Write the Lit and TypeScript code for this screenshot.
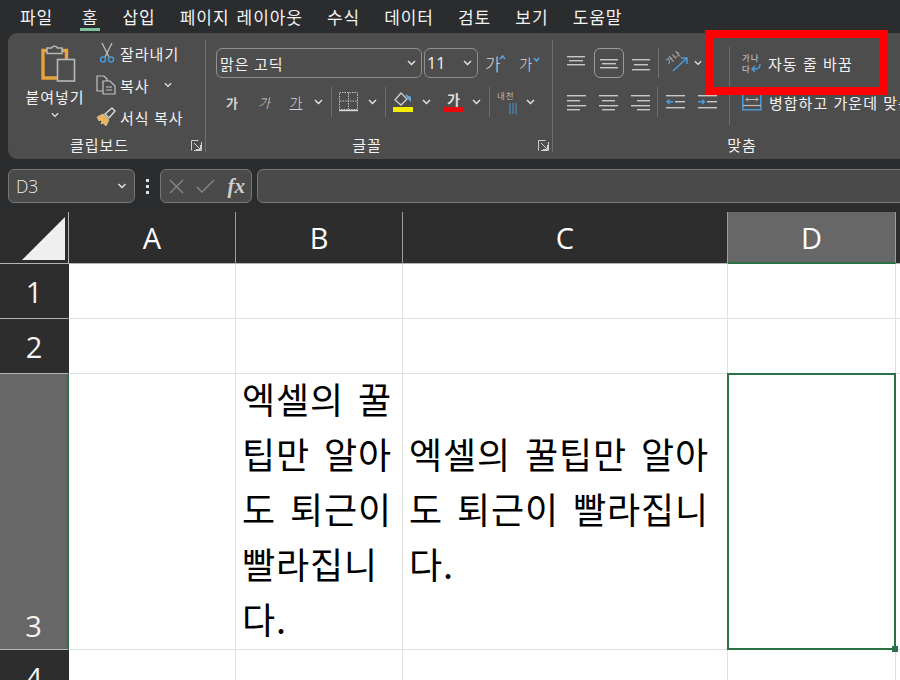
import { LitElement, html, css, svg } from "lit";
import { customElement } from "lit/decorators.js";

const chev = (w = 9, c = "#e6e6e6") => html`<svg class="chev" width="${w}" height="6" viewBox="0 0 9 6"><polyline points="1,1 4.5,4.5 8,1" fill="none" stroke="${c}" stroke-width="1.4"/></svg>`;
const lines = (rows: number[][], w = 20, h = 16) => html`<svg width="${w}" height="${h}" viewBox="0 0 ${w} ${h}">${rows.map(r => svg`<rect x="${r[0]}" y="${r[2]}" width="${r[1]}" height="1.4" fill="#c8c8c8"/>`)}</svg>`;
const launcher = html`<svg class="launcher" width="11" height="11" viewBox="0 0 11 11"><path d="M.5 10.5V.5h7M3 3l6 6M9.5 5v4.5H5M10.5 2v8.5H3" fill="none" stroke="#d0d0d0" stroke-width="1"/></svg>`;

const paste = html`<svg width="35" height="38" viewBox="0 0 35 38">
  <path d="M2 6.500h23.500v27.500H2z" fill="none" stroke="#e8a33d" stroke-width="3.400"/>
  <path d="M6 9.500V4h4.500a3.500 3.500 0 0 1 6 0h4.500v5.500z" fill="#4d4d4d" stroke="#b8b8b8" stroke-width="1.500"/>
  <rect x="16.500" y="15.500" width="17" height="21.500" fill="#4d4d4d" stroke="#b8b8b8" stroke-width="1.600"/>
</svg>`;
const scissors = html`<svg width="16" height="20" viewBox="0 0 16 20">
  <path d="M3 0l7 14M13 0L6 14" fill="none" stroke="#c4c4c4" stroke-width="1.200"/>
  <circle cx="4" cy="16.500" r="2.500" fill="none" stroke="#4a97d0" stroke-width="1.500"/>
  <circle cx="12" cy="16.500" r="2.500" fill="none" stroke="#4a97d0" stroke-width="1.500"/>
</svg>`;
const copy = html`<svg width="21" height="20" viewBox="0 0 21 20">
  <path d="M7 16H1V1h7l3 3v2" fill="none" stroke="#c4c4c4" stroke-width="1.200"/>
  <path d="M7 6h7l5 5v8H7z" fill="#4d4d4d" stroke="#c4c4c4" stroke-width="1.200"/>
  <path d="M10 12h6M10 15h6" stroke="#c4c4c4" stroke-width="1"/>
</svg>`;
const brush = html`<svg width="21" height="20" viewBox="0 0 21 20">
  <path d="M1 10l6-3 6 6-3 6-3-3-2 1 1-3-2-1-1 1z" fill="#e9b45a" stroke="#f0d9a8" stroke-width=".6"/>
  <path d="M9 7l7-6 3 3-6 7z" fill="none" stroke="#d6d6d6" stroke-width="1.500"/>
</svg>`;
const borders = html`<svg width="20" height="20" viewBox="0 0 20 20">
  <rect x=".5" y=".5" width="18" height="17" fill="none" stroke="#bdbdbd" stroke-dasharray="1.500 1"/>
  <path d="M9.500 1v16M1 9h18" stroke="#bdbdbd" stroke-dasharray="1.500 1"/>
  <path d="M0 18.500h19" stroke="#d8d8d8" stroke-width="1.400"/>
</svg>`;
const fill = html`<svg width="21" height="21" viewBox="0 0 21 21">
  <path d="M8 1l-6 7 6 5 6-6z" fill="none" stroke="#cfcfcf" stroke-width="1.300"/>
  <path d="M12 2l6 3v5l-3-3z" fill="#6fa8d8"/>
  <rect x="0" y="15" width="20" height="5" fill="#f5ee00"/>
</svg>`;
const fontColor = html`<svg width="20" height="21" viewBox="0 0 20 21">
  <text x="10" y="13" text-anchor="middle" font-size="14" font-weight="700" fill="#dcdcdc" font-family="'Noto Sans CJK KR',sans-serif">가</text>
  <rect x="0" y="15" width="20" height="5" fill="#e8090c"/>
</svg>`;
const vertical = html`<svg width="22" height="24" viewBox="0 0 22 24">
  <text x="1" y="9" font-size="8.500" fill="#b8b8b8" font-family="'Noto Sans CJK KR',sans-serif">내천</text>
  <path d="M14 13v11M17 13v11M20 13v11" stroke="#4a97d0" stroke-width="1"/>
</svg>`;
const orient = html`<svg width="23" height="26" viewBox="0 0 23 26">
  <text transform="translate(3 15) rotate(-40)" font-size="8" fill="#d0d0d0" font-family="'Noto Sans CJK KR',sans-serif">가나</text>
  <path d="M7 21L21 8M15 8h6v6" fill="none" stroke="#4d9bd8" stroke-width="1.500"/>
</svg>`;
const wrap = html`<svg width="19" height="20" viewBox="0 0 19 20">
  <text x="0" y="8" font-size="8.500" fill="#cfcfcf" font-family="'Noto Sans CJK KR',sans-serif">가나</text>
  <text x="0" y="19" font-size="8.500" fill="#cfcfcf" font-family="'Noto Sans CJK KR',sans-serif">다</text>
  <path d="M18 11c0 4-2 5-4 5H10M13 13l-3 3 3 3" fill="none" stroke="#4d9bd8" stroke-width="1.400"/>
</svg>`;
const merge = html`<svg width="20" height="18" viewBox="0 0 20 18">
  <rect x=".8" y=".8" width="18" height="16" fill="none" stroke="#4d9bd8" stroke-width="1.500"/>
  <path d="M1 12.500h18" stroke="#bdbdbd" stroke-width="1.200"/>
  <path d="M4 6.500h12M6 4.500l-2 2 2 2M14 4.500l2 2-2 2" fill="none" stroke="#bdbdbd" stroke-width="1"/>
</svg>`;
const indentL = html`<svg width="19" height="14" viewBox="0 0 19 14">
  <rect x="0" y="0" width="19" height="1.400" fill="#c8c8c8"/><rect x="9" y="6" width="10" height="1.400" fill="#c8c8c8"/><rect x="0" y="12" width="19" height="1.400" fill="#c8c8c8"/>
  <path d="M7 6.700H1M3.500 4.500L1 6.700l2.500 2.200" fill="none" stroke="#4d9bd8" stroke-width="1.400"/>
</svg>`;
const indentR = html`<svg width="19" height="14" viewBox="0 0 19 14">
  <rect x="0" y="0" width="19" height="1.400" fill="#c8c8c8"/><rect x="9" y="6" width="10" height="1.400" fill="#c8c8c8"/><rect x="0" y="12" width="19" height="1.400" fill="#c8c8c8"/>
  <path d="M0 6.700h6M4 4.500l2.500 2.200L4 8.900" fill="none" stroke="#4d9bd8" stroke-width="1.400"/>
</svg>`;

@customElement("app-root")
export class AppRoot extends LitElement {
  static styles = css`
    :host { display: block; width: 900px; height: 680px; overflow: hidden; background: #2b2c2e; font-family: "Noto Sans CJK KR", "Noto Sans", sans-serif; color: #f2f2f2; }
    svg { display: block; flex: none; overflow: visible; }
    .sp2 { width: 2px; flex: none; } .sp6 { width: 6px; flex: none; } .sp7 { width: 7px; flex: none; } .sp8 { width: 8px; flex: none; } .sp9 { width: 9px; flex: none; } .sp12 { width: 12px; flex: none; } .sp13 { width: 13px; flex: none; } .sp5 { width: 5px; flex: none; }
    .tabs { display: flex; height: 33px; padding-left: 20px; gap: 24.200px; font-size: 17px; letter-spacing: .9px; word-spacing: 2.500px; align-items: flex-start; }
    .tab { height: 31px; line-height: 33px; white-space: pre; }
    .tab.on { border-bottom: 3px solid #7cc29c; box-sizing: border-box; padding: 0 2px; margin: 0 -2px 0 2.500px; }
    .ribbon { position: relative; margin-left: 8px; width: 912px; height: 126px; background: #4d4d4d; border-radius: 9px 0 0 9px; display: flex; box-sizing: border-box; padding: 7px 0; font-size: 15px; letter-spacing: 1px; }
    .group { display: flex; flex-direction: column; height: 112px; box-sizing: border-box; border-right: 1px solid #6e6e6e; position: relative; flex: none; }
    .g1 { width: 198px; padding-left: 12px; }
    .g2 { width: 347px; padding-left: 10px; }
    .g3 { flex: 1; padding-left: 14px; border: 0; }
    .body { height: 93px; display: flex; }
    .label { box-sizing: border-box; height: 19px; padding-top: 4px; line-height: 15px; text-align: center; font-size: 15px; }
    .g1 .label { padding-right: 26px; }
    .g2 .label { padding-right: 34px; }
    .g3 .label { width: 350px; }
    .launcher { position: absolute; right: 3px; bottom: 1px; }
    .pastecol { width: 70px; display: flex; flex-direction: column; align-items: center; }
    .pastecol .ic { margin-top: 4px; height: 38px; margin-left: 6px; }
    .pastecol .t { margin-top: 5px; line-height: 20px; }
    .pastecol .chev { margin-top: 5px; }
    .smalls { display: flex; flex-direction: column; margin-left: 6px; padding-top: 3px; gap: 12px; }
    .sm { display: flex; align-items: center; height: 20px; gap: 3px; white-space: pre; }
    .sm .ic { width: 21px; display: flex; justify-content: center; }
    .sm .chev { margin-left: 11px; }
    .col { display: flex; flex-direction: column; }
    .row { display: flex; align-items: center; }
    .r1 { height: 30px; margin-top: 8px; }
    .r2 { height: 30px; margin-top: 9px; }
    .select { box-sizing: border-box; height: 30px; border: 1px solid #8f8f8f; border-radius: 6px; display: flex; align-items: center; justify-content: space-between; padding: 0 5px 0 3px; font-size: 15px; letter-spacing: 1px; background: #4d4d4d; }
    .s-font { width: 206px; margin-right: 2px; }
    .s-size { width: 54px; font-family: "Open Sans", sans-serif; font-size: 16px; padding-left: 2px; letter-spacing: 0; }
    .ga { position: relative; color: #d8d8d8; white-space: pre; letter-spacing: 0; }
    .ga1 { margin-left: 7px; width: 21px; font-size: 17px; font-weight: 300; }
    .ga2 { margin-left: 13px; width: 21px; font-size: 14.500px; font-weight: 300; }
    .caret { position: absolute; right: 0; top: 4px; }
    .fmt { width: 32px; text-align: center; font-size: 13px; color: #d2d2d2; letter-spacing: 0; }
    .b { font-weight: 700; }
    .i { font-style: italic; font-weight: 300; }
    .u { text-decoration: underline; font-weight: 300; font-size: 14px; }
    .sep { width: 1px; height: 30px; background: #6e6e6e; flex: none; }
    .midbtn { width: 30px; height: 30px; box-sizing: border-box; border: 1px solid #9a9a9a; border-radius: 6px; display: flex; align-items: center; justify-content: center; }
    .tall { width: 1px; height: 78px; background: #6e6e6e; margin-top: 7px; flex: none; }
    .wraps { margin-left: 12px; display: flex; flex-direction: column; }
    .wr { display: flex; align-items: center; gap: 7px; white-space: pre; font-size: 15px; letter-spacing: 1px; word-spacing: 1px; }
    .redbox { position: absolute; left: 697px; top: -3px; width: 183px; height: 65px; box-sizing: border-box; border: 8px solid #ff0000; }

    .fbar { display: flex; align-items: stretch; height: 34px; margin-top: 10px; padding-left: 8px; gap: 0; }
    .box { box-sizing: border-box; height: 34px; background: #4a4a4a; border: 1px solid #767676; border-radius: 6px; display: flex; align-items: center; flex: none; }
    .name { width: 127px; padding: 0 6px 0 7px; justify-content: space-between; font-family: "Open Sans", sans-serif; font-size: 17.500px; font-weight: 300; color: #ececec; }
    .dots { width: 25px; flex: none; display: flex; flex-direction: column; align-items: center; justify-content: center; gap: 3px; }
    .dots i { width: 3px; height: 3px; background: #e0e0e0; display: block; }
    .fx { width: 92px; justify-content: space-between; padding: 0 6px 0 8px; }
    .fxt { font-family: "Liberation Serif", serif; font-style: italic; font-weight: 700; font-size: 21px; color: #cfcfcf; }
    .input { width: 660px; margin-left: 5px; }

    .sheet { display: grid; margin-top: 9px; grid-template-columns: 69px 167px 167px 325px 168px 100px; grid-template-rows: 52px 55px 55px 276px 55px; font-family: "Open Sans", sans-serif; }
    .corner { background: #2d2d2d; border-right: 1px solid #b4b4b4; border-bottom: 1px solid #b4b4b4; position: relative; display: flex; align-items: flex-end; justify-content: flex-end; padding: 0 3px 3px 0; }
    .ch { background: #2d2d2d; border-right: 1px solid #9c9c9c; border-bottom: 1px solid #b4b4b4; display: flex; align-items: center; justify-content: center; font-size: 29px; color: #fff; }
    .ch.sel { background: #676767; border-bottom: 2px solid #2a7148; }
    .rh { background: #2d2d2d; border-right: 1px solid #2d2d2d; border-bottom: 1px solid #b4b4b4; display: flex; align-items: center; justify-content: center; font-size: 29px; color: #f4f4f4; }
    .rh.sel { background: #676767; border-right: 2px solid #2a7148; align-items: flex-end; padding-bottom: 4px; }
    .c { background: #fff; border-right: 1px solid #e0e0e0; border-bottom: 1px solid #e0e0e0; box-sizing: border-box; color: #000; position: relative; font-family: "Noto Sans CJK KR", sans-serif; font-size: 36px; letter-spacing: .9px; word-spacing: 5px; line-height: 55px; padding: 0 0 0 6px; display: flex; flex-direction: column; white-space: pre; }
    .c.bottom { justify-content: flex-end; padding-bottom: 3px; }
    .c.middle { justify-content: center; padding-bottom: 7px; }
    .c.active { z-index: 2; }
    .selection { position: absolute; inset: -1px; border: 2px solid #2a7148; pointer-events: none; }
    .handle { position: absolute; right: -4px; bottom: -4px; width: 6px; height: 6px; background: #2a7148; }
  `;

  render() {
    const tabs = ["파일", "홈", "삽입", "페이지 레이아웃", "수식", "데이터", "검토", "보기", "도움말"];
    return html`
      <div class="tabs">${tabs.map(t => html`<div class="tab ${t === "홈" ? "on" : ""}">${t}</div>`)}</div>
      <div class="ribbon">
        <div class="group g1">
          <div class="body">
            <div class="pastecol">
              <div class="ic">${paste}</div>
              <div class="t">붙여넣기</div>
              ${chev(8)}
            </div>
            <div class="smalls">
              <div class="sm"><span class="ic">${scissors}</span>잘라내기</div>
              <div class="sm"><span class="ic">${copy}</span>복사${chev(8)}</div>
              <div class="sm"><span class="ic">${brush}</span>서식 복사</div>
            </div>
          </div>
          <div class="label">클립보드</div>
          ${launcher}
        </div>
        <div class="group g2">
          <div class="body col">
            <div class="row r1">
              <div class="select s-font"><span>맑은 고딕</span>${chev()}</div>
              <div class="select s-size"><span>11</span>${chev()}</div>
              <div class="ga ga1">가<svg class="caret" width="7" height="5" viewBox="0 0 7 5"><polyline points="1,4 3.500,1 6,4" fill="none" stroke="#5aa6dc" stroke-width="1.500"/></svg></div>
              <div class="ga ga2">가<svg class="caret" width="7" height="5" viewBox="0 0 7 5"><polyline points="1,1 3.500,4 6,1" fill="none" stroke="#5aa6dc" stroke-width="1.500"/></svg></div>
            </div>
            <div class="row r2">
              <div class="fmt b">가</div>
              <div class="fmt i">가</div>
              <div class="fmt u">가</div>
              <div class="sp2"></div>${chev()}
              <div class="sp8"></div><div class="sep"></div>
              <div class="sp7"></div>${borders}
              <div class="sp9"></div>${chev()}
              <div class="sp8"></div><div class="sep"></div>
              <div class="sp7"></div>${fill}
              <div class="sp8"></div>${chev()}
              <div class="sp13"></div>${fontColor}
              <div class="sp8"></div>${chev()}
              <div class="sp8"></div><div class="sep"></div>
              <div class="sp6"></div>${vertical}
              <div class="sp8"></div>${chev()}
            </div>
          </div>
          <div class="label">글꼴</div>
          ${launcher}
        </div>
        <div class="group g3">
          <div class="body">
            <div class="col">
              <div class="row r1">
                ${lines([[0, 18, 1], [2, 14, 5], [0, 18, 9]], 18, 16)}
                <div class="sp9"></div>
                <div class="midbtn">${lines([[0, 18, 3], [2, 14, 7], [0, 18, 11]], 18, 15)}</div>
                <div class="sp8"></div>
                ${lines([[0, 18, 4], [2, 14, 9], [0, 18, 14]], 18, 16)}
                <div class="sp8"></div><div class="sep"></div>
                <div class="sp7"></div>${orient}
                <div class="sp5"></div>${chev(8)}
              </div>
              <div class="row r2">
                ${lines([[0, 19, 1], [0, 13, 6], [0, 19, 11], [0, 13, 15]], 19, 17)}
                <div class="sp13"></div>
                ${lines([[0, 19, 1], [3, 13, 6], [0, 19, 11], [3, 13, 15]], 19, 17)}
                <div class="sp13"></div>
                ${lines([[0, 19, 1], [6, 13, 6], [0, 19, 11], [6, 13, 15]], 19, 17)}
                <div class="sp7"></div><div class="sep"></div>
                <div class="sp8"></div>${indentL}
                <div class="sp13"></div>${indentR}
              </div>
            </div>
            <div class="sp12"></div>
            <div class="tall"></div>
            <div class="wraps">
              <div class="wr r1">${wrap}자동 줄 바꿈</div>
              <div class="wr r2">${merge}병합하고 가운데 맞춤</div>
            </div>
          </div>
          <div class="label">맞춤</div>
        </div>
        <div class="redbox"></div>
      </div>

      <div class="fbar">
        <div class="box name"><span>D3</span>${chev(12)}</div>
        <div class="dots"><i></i><i></i><i></i></div>
        <div class="box fx">
          <svg width="15" height="15" viewBox="0 0 15 15"><path d="M1 1l13 13M14 1L1 14" stroke="#8a8a8a" stroke-width="1.300"/></svg>
          <svg width="19" height="14" viewBox="0 0 19 14"><path d="M1 8l5 5L18 1" fill="none" stroke="#8a8a8a" stroke-width="1.300"/></svg>
          <span class="fxt">fx</span>
        </div>
        <div class="box input"></div>
      </div>

      <div class="sheet">
        <div class="corner"><svg width="43" height="43" viewBox="0 0 43 43"><path d="M43 0v43H0z" fill="#efefef"/></svg></div>
        <div class="ch">A</div><div class="ch">B</div><div class="ch">C</div><div class="ch sel">D</div><div class="ch"></div>

        <div class="rh">1</div><div class="c"></div><div class="c"></div><div class="c"></div><div class="c"></div><div class="c"></div>
        <div class="rh">2</div><div class="c"></div><div class="c"></div><div class="c"></div><div class="c"></div><div class="c"></div>
        <div class="rh sel">3</div>
        <div class="c"></div>
        <div class="c bottom"><div>엑셀의 꿀</div><div>팁만 알아</div><div>도 퇴근이</div><div>빨라집니</div><div>다.</div></div>
        <div class="c middle"><div>엑셀의 꿀팁만 알아</div><div>도 퇴근이 빨라집니</div><div>다.</div></div>
        <div class="c active"><div class="selection"><div class="handle"></div></div></div>
        <div class="c"></div>
        <div class="rh">4</div><div class="c"></div><div class="c"></div><div class="c"></div><div class="c"></div><div class="c"></div>
      </div>
    `;
  }
}
